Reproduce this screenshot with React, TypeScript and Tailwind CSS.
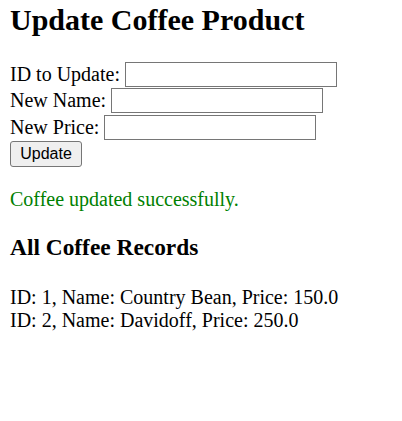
export default function App() {
    const rows = [
        { label: "ID to Update:", name: "id" },
        { label: "New Name:", name: "name" },
        { label: "New Price:", name: "price" },
    ];
    const records = [
        { id: 1, name: "Country Bean", price: "150.0" },
        { id: 2, name: "Davidoff", price: "250.0" },
    ];

    return (
        <div className="min-h-[421px] bg-white px-[10px] font-['Liberation_Serif',serif] text-[20px] leading-[23px] text-black">
            <h1 className="mt-[3px] text-[30px] font-bold leading-[34px]">Update Coffee Product</h1>
            <form className="mt-[24px]" onSubmit={(e) => e.preventDefault()}>
                {rows.map((row) => (
                    <div key={row.name} className="flex h-[26.67px] items-center">
                        <label htmlFor={row.name}>{row.label}</label>
                        <input
                            id={row.name}
                            name={row.name}
                            type="text"
                            className="ml-[5px] h-[25px] w-[212px] border border-[#767676] bg-white px-[2px] font-['Liberation_Sans',sans-serif] text-[16px] outline-none"
                        />
                    </div>
                ))}
                <div className="flex h-[26.67px] items-center">
                    <button
                        type="submit"
                        className="h-[26px] w-[72px] rounded-[3px] border border-[#767676] bg-[#efefef] font-['Liberation_Sans',sans-serif] text-[16px] leading-[20px] text-black"
                    >
                        Update
                    </button>
                </div>
            </form>
            <p className="mt-[20px] text-[#008000]">Coffee updated successfully.</p>
            <h3 className="mt-[23px] text-[23.4px] font-bold leading-[27px]">All Coffee Records</h3>
            <div className="mt-[25px]">
                {records.map((r) => (
                    <div key={r.id}>
                        ID: {r.id}, Name: {r.name}, Price: {r.price}
                    </div>
                ))}
            </div>
        </div>
    );
}
